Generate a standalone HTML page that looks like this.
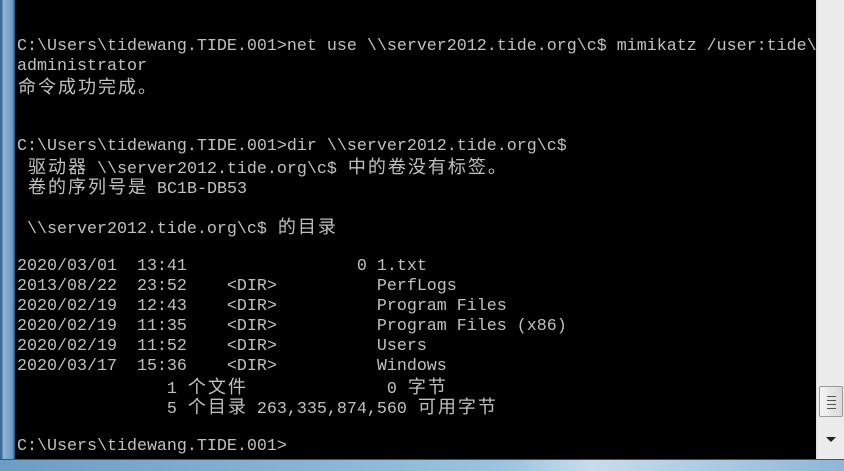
<!DOCTYPE html>
<html><head><meta charset="utf-8"><style>
html,body{margin:0;padding:0;width:844px;height:470px;overflow:hidden;background:#000}
#lf{position:absolute;left:0;top:0;width:15px;height:470px;background:linear-gradient(90deg,#3a6f9c 0,#3a6f9c 2px,#8fb4d6 3px,#6c9ac4 13px,#2d5a82 14px)}
#bf{position:absolute;left:0;top:459px;width:844px;height:11px;background:linear-gradient(90deg,#6d9cc6,#9cc3e0 60%,#c8dcec 70%,#8fb6d8);border-top:1px solid #2d5a82}
#sb{position:absolute;left:816px;top:0;width:28px;height:459px;background:#ececec;border-left:1px solid #dcdcdc}
#th{position:absolute;left:819px;top:386px;width:24px;height:31px;background:linear-gradient(90deg,#f4f4f4,#dadada);border:1px solid #9a9a9a;border-radius:2px;box-sizing:border-box}
#th i{position:absolute;left:7px;width:9px;height:1px;background:#555}
#ar{position:absolute;left:826px;top:437px;width:0;height:0;border-left:5px solid transparent;border-right:5px solid transparent;border-top:5px solid #222}
#t{position:absolute;left:17px;top:37px;color:#c0c0c0;font-family:"Liberation Mono",monospace;font-size:16.67px}
#t div{height:20px;line-height:20px;white-space:pre;overflow:hidden}
.w{display:inline-block;width:20px;text-align:center;font-family:"Noto Sans CJK SC","WenQuanYi Zen Hei",sans-serif;font-size:18px;line-height:1}
</style></head><body>
<div id="lf"></div>
<div id="sb"></div>
<div id="th"><i style="top:9px"></i><i style="top:13px"></i><i style="top:17px"></i><i style="top:21px"></i></div>
<div id="ar"></div>
<div id="t">
<div>C:\Users\tidewang.TIDE.001&gt;net use \\server2012.tide.org\c$ mimikatz /user:tide\</div>
<div>administrator</div>
<div><span class="w">命</span><span class="w">令</span><span class="w">成</span><span class="w">功</span><span class="w">完</span><span class="w">成</span><span class="w">。</span></div>
<div> </div>
<div> </div>
<div>C:\Users\tidewang.TIDE.001&gt;dir \\server2012.tide.org\c$</div>
<div> <span class="w">驱</span><span class="w">动</span><span class="w">器</span> \\server2012.tide.org\c$ <span class="w">中</span><span class="w">的</span><span class="w">卷</span><span class="w">没</span><span class="w">有</span><span class="w">标</span><span class="w">签</span><span class="w">。</span></div>
<div> <span class="w">卷</span><span class="w">的</span><span class="w">序</span><span class="w">列</span><span class="w">号</span><span class="w">是</span> BC1B-DB53</div>
<div> </div>
<div> \\server2012.tide.org\c$ <span class="w">的</span><span class="w">目</span><span class="w">录</span></div>
<div> </div>
<div>2020/03/01  13:41                 0 1.txt</div>
<div>2013/08/22  23:52    &lt;DIR&gt;          PerfLogs</div>
<div>2020/02/19  12:43    &lt;DIR&gt;          Program Files</div>
<div>2020/02/19  11:35    &lt;DIR&gt;          Program Files (x86)</div>
<div>2020/02/19  11:52    &lt;DIR&gt;          Users</div>
<div>2020/03/17  15:36    &lt;DIR&gt;          Windows</div>
<div>               1 <span class="w">个</span><span class="w">文</span><span class="w">件</span>              0 <span class="w">字</span><span class="w">节</span></div>
<div>               5 <span class="w">个</span><span class="w">目</span><span class="w">录</span> 263,335,874,560 <span class="w">可</span><span class="w">用</span><span class="w">字</span><span class="w">节</span></div>
<div> </div>
<div>C:\Users\tidewang.TIDE.001&gt;</div>
</div>
<div id="bf"></div>
</body></html>
